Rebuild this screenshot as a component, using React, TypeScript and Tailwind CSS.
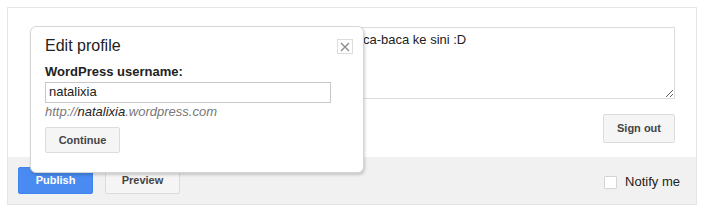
import React from "react";

export default function App() {
  return (
    <div className="w-[703px] h-[213px] bg-white pt-[7px] pl-[7px] font-['Liberation_Sans',Arial,sans-serif]">
      <div className="relative w-[690px] h-[198px] border border-[#e5e5e5] flex flex-col">
        {/* top area */}
        <div className="flex flex-col pl-[32px] pr-[21px] pt-[19px] pb-[14px]">
          <textarea
            readOnly
            defaultValue="Terima kasih sudah menyempatkan diri untuk baca-baca ke sini :D"
            className="w-full h-[72px] border border-[#dcdcdc] pl-[43px] pr-[4px] pt-[4px] text-[13px] leading-[16px] text-[#222] outline-none resize-y font-['Liberation_Sans',Arial,sans-serif]"
          />
          <div className="flex justify-end mt-[15px]">
            <button className="h-[29px] w-[72px] rounded-[2px] border border-[#dcdcdc] bg-[#f5f5f5] text-[11px] font-bold text-[#444]">
              Sign out
            </button>
          </div>
        </div>
        {/* footer */}
        <div className="flex-1 bg-[#f1f1f1] flex items-start pl-[10px] pr-[16px] pt-[10px]">
          <button className="h-[27px] w-[75px] rounded-[2px] border border-[#3f84ef] bg-[#4a8bf2] text-[11px] font-bold text-white">
            Publish
          </button>
          <button className="ml-[12px] h-[27px] w-[75px] rounded-[2px] border border-[#dcdcdc] bg-[#f5f5f5] text-[11px] font-bold text-[#444]">
            Preview
          </button>
          <div className="ml-auto flex items-center mt-[7px]">
            <span className="w-[13px] h-[13px] border border-[#d4d4d4] bg-white rounded-[1px]" />
            <span className="ml-[8px] text-[13px] leading-[16px] text-[#222]">Notify me</span>
          </div>
        </div>

        {/* popup */}
        <div className="absolute left-[22px] top-[18px] w-[334px] h-[147px] bg-white border border-[#d6d6d6] rounded-[6px] shadow-[1px_2px_3px_rgba(0,0,0,0.18)] pl-[14px] pt-[9px] pr-[10px]">
          <div className="flex items-start justify-between">
            <div className="text-[16px] leading-[20px] text-[#222]">Edit profile</div>
            <div className="mt-[3px] w-[16px] h-[15px] border border-[#dcdcdc] flex items-center justify-center">
              <svg width="10" height="10" viewBox="0 0 10 10">
                <path d="M1 1 L9 9 M9 1 L1 9" stroke="#8a8a8a" strokeWidth="1.3" />
              </svg>
            </div>
          </div>
          <div className="mt-[8px] text-[13px] leading-[16px] font-bold text-[#222]">WordPress username:</div>
          <input
            readOnly
            value="natalixia"
            className="mt-[2px] block w-[286px] h-[21px] border border-[#c8c8c8] px-[3px] pb-[2px] text-[13px] text-[#222] outline-none font-['Liberation_Sans',Arial,sans-serif]"
          />
          <div className="text-[13px] leading-[17px] italic text-[#777]">
            http://<span className="text-[#222]">natalixia</span>.wordpress.com
          </div>
          <button className="mt-[7px] h-[26px] w-[75px] rounded-[2px] border border-[#dcdcdc] bg-[#f5f5f5] text-[11px] font-bold text-[#444]">
            Continue
          </button>
        </div>
      </div>
    </div>
  );
}
